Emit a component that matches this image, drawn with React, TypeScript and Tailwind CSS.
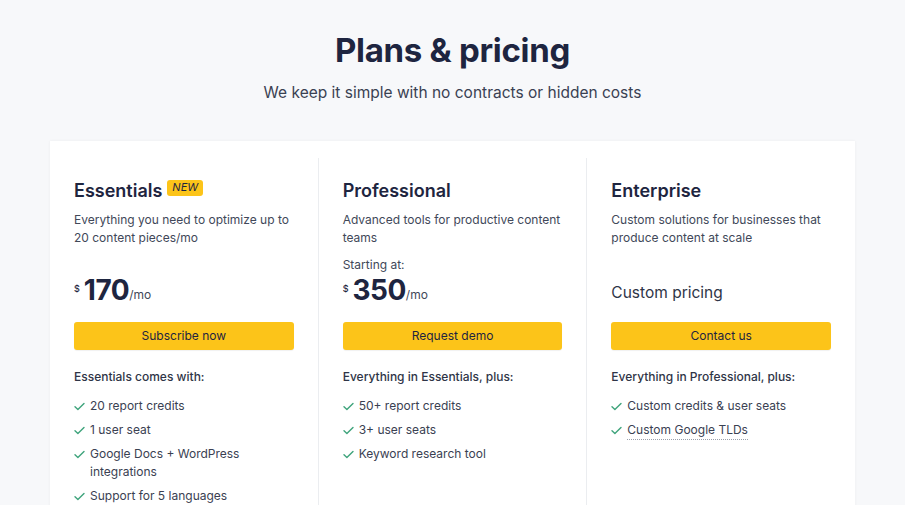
import React from "react";

const Check = () => (
  <svg width="11" height="9" viewBox="0 0 11 9" className="shrink-0 mt-[5px]" fill="none">
    <path d="M1 4.8 L3.9 7.6 L10 1.4" stroke="#3fa47c" strokeWidth="1.4" strokeLinecap="round" strokeLinejoin="round" />
  </svg>
);

type Item = { text: string; dotted?: boolean };

function Column({
  title,
  badge,
  desc,
  price,
  button,
  listTitle,
  items,
  first,
}: {
  title: string;
  badge?: boolean;
  desc: string;
  price: React.ReactNode;
  button: string;
  listTitle: string;
  items: Item[];
  first?: boolean;
}) {
  return (
    <div className={`flex-1 px-6 pt-[21px] ${first ? "" : "border-l border-[#ebedf0]"}`}>
      <div className="flex items-center gap-[5px] h-[24px]">
        <h2 className="text-[18px] font-semibold text-[#1e2540] leading-[24px]">{title}</h2>
        {badge && (
          <span className="bg-[#fcc419] rounded-[3px] px-[5px] h-[16px] flex items-center text-[11px] italic text-[#1e2540] -mt-[7px]">
            NEW
          </span>
        )}
      </div>
      <p className="mt-[8px] text-[12px] leading-[18px] text-[#414859] h-[36px]">{desc}</p>
      <div className="h-[59px] flex flex-col justify-end">{price}</div>
      <button className="mt-[16px] w-full h-[28px] rounded-[3px] bg-[#fcc419] text-[12px] text-[#1e2540] shadow-[0_1px_1px_rgba(0,0,0,0.06)]">
        {button}
      </button>
      <div className="mt-[18px] text-[12px] leading-[18px] font-medium text-[#2f3547]">{listTitle}</div>
      <ul className="mt-[11px] flex flex-col gap-[6px]">
        {items.map((it) => (
          <li key={it.text} className="flex gap-[5px] text-[12px] leading-[18px] text-[#3a4152]">
            <Check />
            <span className={it.dotted ? "border-b border-dotted border-[#9aa0ab]" : ""}>{it.text}</span>
          </li>
        ))}
      </ul>
    </div>
  );
}

const Price = ({ amount, starting }: { amount: string; starting?: boolean }) => (
  <div className="flex flex-col">
    {starting && <div className="text-[12px] leading-[18px] text-[#414859]">Starting at:</div>}
    <div className="flex items-end h-[32px] text-[#1e2540]">
      <span className="text-[9px] self-start mt-[8px] mr-[4px] font-medium">$</span>
      <span className="text-[28px] font-bold leading-[32px] tracking-[-0.5px]">{amount}</span>
      <span className="text-[12px] leading-[18px] mb-[2px] text-[#414859]">/mo</span>
    </div>
  </div>
);

export default function App() {
  return (
    <div
      className="w-[905px] h-[505px] overflow-hidden bg-[#f7f8fa]"
      style={{ fontFamily: "Inter, 'Noto Sans', sans-serif" }}
    >
      <div className="pt-[30px] text-center">
        <h1 className="text-[33px] leading-[40px] font-bold text-[#1e2540] tracking-[-0.3px]">Plans &amp; pricing</h1>
        <p className="mt-[12px] text-[15.5px] leading-[22px] text-[#3a4152]">
          We keep it simple with no contracts or hidden costs
        </p>
      </div>
      <div className="mt-[37px] mx-[50px] bg-white pt-[17px] h-[400px] flex shadow-[0_0_3px_rgba(0,0,0,0.05)]">
        <Column
          first
          title="Essentials"
          badge
          desc="Everything you need to optimize up to 20 content pieces/mo"
          price={<Price amount="170" />}
          button="Subscribe now"
          listTitle="Essentials comes with:"
          items={[
            { text: "20 report credits" },
            { text: "1 user seat" },
            { text: "Google Docs + WordPress integrations" },
            { text: "Support for 5 languages", dotted: true },
          ]}
        />
        <Column
          title="Professional"
          desc="Advanced tools for productive content teams"
          price={<Price amount="350" starting />}
          button="Request demo"
          listTitle="Everything in Essentials, plus:"
          items={[
            { text: "50+ report credits" },
            { text: "3+ user seats" },
            { text: "Keyword research tool" },
          ]}
        />
        <Column
          title="Enterprise"
          desc="Custom solutions for businesses that produce content at scale"
          price={<div className="text-[15.5px] leading-[24px] text-[#2f3547] mb-[1px]">Custom pricing</div>}
          button="Contact us"
          listTitle="Everything in Professional, plus:"
          items={[{ text: "Custom credits & user seats" }, { text: "Custom Google TLDs", dotted: true }]}
        />
      </div>
    </div>
  );
}
